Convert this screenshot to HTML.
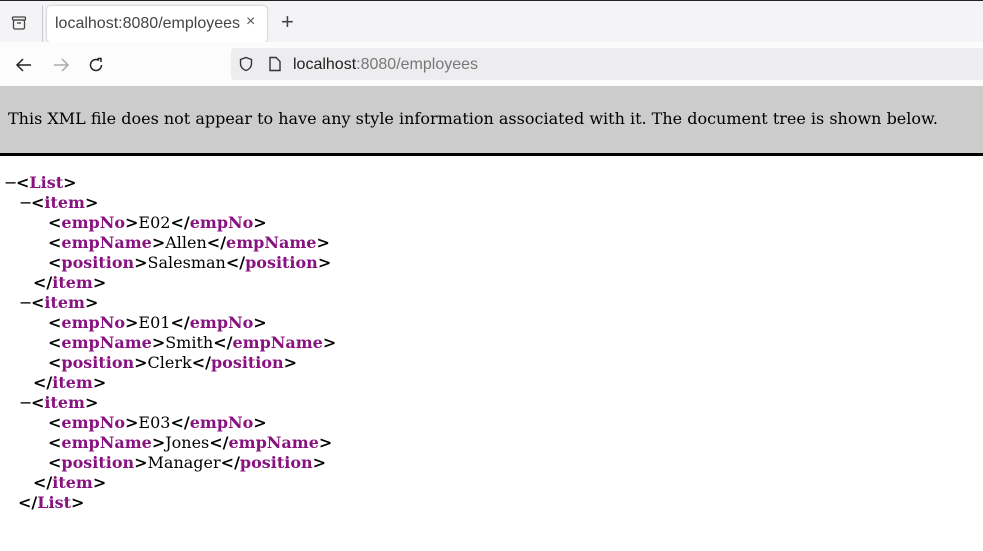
<!DOCTYPE html>
<html><head><style>
body{margin:0;width:983px;height:551px;overflow:hidden;background:#fff;font-family:"DejaVu Serif",serif;font-size:16px;position:relative}
.top{position:absolute;left:0;top:0;width:983px;height:42px;background:#f4f4f6;border-top:1px solid #222}
.tab{position:absolute;left:47px;top:5px;width:220px;height:36px;background:#fff;border-radius:4px;box-shadow:0 0 2px rgba(0,0,0,.3);font-family:"Liberation Sans",sans-serif;font-size:16px;color:#444}
.nav{position:absolute;left:0;top:42px;width:983px;height:44px;background:#fcfcfd}
.url{position:absolute;left:231px;top:6px;width:752px;height:32px;background:#ededf0;border-radius:4px 0 0 4px;font-family:"Liberation Sans",sans-serif;font-size:16px}
.info{position:absolute;left:0;top:86px;width:983px;height:67px;background:#ccc;border-bottom:3px solid #000}
.info div{position:absolute;left:8px;top:23px;font-size:16px;color:#000}
.tree{position:absolute;left:0;top:173px;line-height:20px;font-weight:bold;color:#000;white-space:pre}
.t{color:#881280}.v{font-weight:normal}
.d{font-weight:normal;display:inline-block;width:12px;font-family:"DejaVu Sans",sans-serif}
</style></head><body>
<div class="top">
<svg style="position:absolute;left:11px;top:14px" width="16" height="16" viewBox="0 0 16 16" fill="none" stroke="#444" stroke-width="1.3"><rect x="1.5" y="2" width="13" height="3" rx="1"/><rect x="2.5" y="5" width="11" height="9" rx="1.5"/><line x1="6" y1="8" x2="10" y2="8"/></svg>
<div style="position:absolute;left:42px;top:4px;width:1px;height:38px;background:#ccc"></div>
<div class="tab"><span style="position:absolute;left:8px;top:9px">localhost:8080/employees</span><span style="position:absolute;left:199px;top:7px;font-size:16px;color:#555">×</span></div>
<span style="position:absolute;left:281px;top:9px;font-family:'Liberation Sans';font-size:22px;color:#444;line-height:24px">+</span>
</div>
<div class="nav">
<svg style="position:absolute;left:15px;top:15px" width="18" height="16" viewBox="0 0 18 16" fill="none" stroke="#222" stroke-width="1.5"><path d="M16 8H2M8 2L2 8l6 6"/></svg>
<svg style="position:absolute;left:52px;top:15px" width="18" height="16" viewBox="0 0 18 16" fill="none" stroke="#aaa" stroke-width="1.5"><path d="M2 8h14M10 2l6 6-6 6"/></svg>
<svg style="position:absolute;left:88px;top:15px" width="16" height="16" viewBox="0 0 16 16" fill="none" stroke="#222" stroke-width="1.5"><path d="M13.5 8A5.5 5.5 0 1 1 11 3.4"/><path d="M9.5 1.5h3.5v3.5" /></svg>
<div class="url">
<svg style="position:absolute;left:7px;top:8px" width="16" height="16" viewBox="0 0 16 16" fill="none" stroke="#333" stroke-width="1.4"><path d="M8 1.5l5.5 2v4c0 3.5-2.5 6-5.5 7-3-1-5.5-3.5-5.5-7v-4z"/></svg>
<svg style="position:absolute;left:37px;top:8px" width="14" height="16" viewBox="0 0 14 16" fill="none" stroke="#333" stroke-width="1.4"><path d="M2 1.5h6l4 4v9H2z"/></svg>
<span style="position:absolute;left:62px;top:8px;color:#222">localhost<span style="color:#777">:8080/employees</span></span>
</div>
</div>
<div class="info"><div>This XML file does not appear to have any style information associated with it. The document tree is shown below.</div></div>
<div class="tree"><span style="position:absolute;left:4px;top:0"><span class="d">−</span>&lt;<span class="t">List</span>&gt;</span><span style="position:absolute;left:19px;top:20px"><span class="d">−</span>&lt;<span class="t">item</span>&gt;</span><span style="position:absolute;left:48px;top:40px">&lt;<span class="t">empNo</span>&gt;<span class="v">E02</span>&lt;/<span class="t">empNo</span>&gt;</span><span style="position:absolute;left:48px;top:60px">&lt;<span class="t">empName</span>&gt;<span class="v">Allen</span>&lt;/<span class="t">empName</span>&gt;</span><span style="position:absolute;left:48px;top:80px">&lt;<span class="t">position</span>&gt;<span class="v">Salesman</span>&lt;/<span class="t">position</span>&gt;</span><span style="position:absolute;left:33px;top:100px">&lt;/<span class="t">item</span>&gt;</span><span style="position:absolute;left:19px;top:120px"><span class="d">−</span>&lt;<span class="t">item</span>&gt;</span><span style="position:absolute;left:48px;top:140px">&lt;<span class="t">empNo</span>&gt;<span class="v">E01</span>&lt;/<span class="t">empNo</span>&gt;</span><span style="position:absolute;left:48px;top:160px">&lt;<span class="t">empName</span>&gt;<span class="v">Smith</span>&lt;/<span class="t">empName</span>&gt;</span><span style="position:absolute;left:48px;top:180px">&lt;<span class="t">position</span>&gt;<span class="v">Clerk</span>&lt;/<span class="t">position</span>&gt;</span><span style="position:absolute;left:33px;top:200px">&lt;/<span class="t">item</span>&gt;</span><span style="position:absolute;left:19px;top:220px"><span class="d">−</span>&lt;<span class="t">item</span>&gt;</span><span style="position:absolute;left:48px;top:240px">&lt;<span class="t">empNo</span>&gt;<span class="v">E03</span>&lt;/<span class="t">empNo</span>&gt;</span><span style="position:absolute;left:48px;top:260px">&lt;<span class="t">empName</span>&gt;<span class="v">Jones</span>&lt;/<span class="t">empName</span>&gt;</span><span style="position:absolute;left:48px;top:280px">&lt;<span class="t">position</span>&gt;<span class="v">Manager</span>&lt;/<span class="t">position</span>&gt;</span><span style="position:absolute;left:33px;top:300px">&lt;/<span class="t">item</span>&gt;</span><span style="position:absolute;left:18px;top:320px">&lt;/<span class="t">List</span>&gt;</span></div>
</body></html>
